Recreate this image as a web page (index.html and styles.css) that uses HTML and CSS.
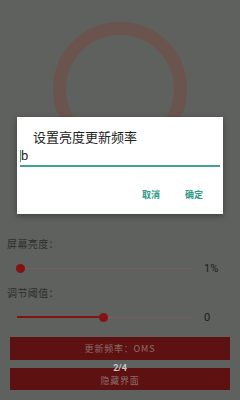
FILE: index.html
```html
<!DOCTYPE html>
<html lang="zh">
<head>
<meta charset="utf-8">
<link rel="stylesheet" href="styles.css">
</head>
<body>
<div class="page">
  <div class="hero"><div class="ring"></div></div>
  <div class="label label-first">屏幕亮度：</div>
  <div class="slider-row">
    <div class="track"><div class="fill" style="width:0px"></div><div class="thumb thumb-a"></div></div>
    <div class="value">1%</div>
  </div>
  <div class="label label-second">调节阈值：</div>
  <div class="slider-row slider-row-2">
    <div class="track"><div class="fill fill-2" style="width:87px"></div><div class="thumb thumb-b"></div></div>
    <div class="value">0</div>
  </div>
  <div class="btn btn-1">更新频率：OMS</div>
  <div class="btn btn-2">隐藏界面</div>
  <div class="counter">2/4</div>
</div>
<div class="dlg">
  <div class="dlg-title">设置亮度更新频率</div>
  <div class="dlg-input"><span class="caret"></span>b</div>
  <div class="dlg-actions">
    <span class="act">取消</span>
    <span class="act">确定</span>
  </div>
</div>
</body>
</html>
```
FILE: styles.css
```css
html, body {
  margin: 0;
  padding: 0;
}
body {
  width: 240px;
  height: 400px;
  background: #5f615e;
  font-family: "Noto Sans CJK SC", "Noto Sans", Roboto, sans-serif;
  position: relative;
  overflow: hidden;
}
.page {
  display: flex;
  flex-direction: column;
  position: relative;
  height: 400px;
}
.hero {
  display: flex;
  justify-content: center;
  padding-top: 22px;
}
.ring {
  width: 108px;
  height: 108px;
  border: 13px solid #6c544e;
  border-radius: 50%;
}
.label {
  font-size: 10px;
  line-height: 12px;
  height: 12px;
  color: #2c2e2c;
  padding-left: 7px;
  letter-spacing: 0.4px;
}
.label-first { margin-top: 82px; }
.label-second { margin-top: 11px; }
.slider-row {
  display: flex;
  align-items: center;
  height: 16px;
  margin-top: 10px;
}
.slider-row-2 { margin-top: 10px; }
.track {
  position: relative;
  margin-left: 17px;
  width: 175px;
  height: 1px;
  background: #7b5c5b;
}
.fill {
  position: absolute;
  left: 0;
  top: -1px;
  height: 2px;
  background: #7d1515;
}
.thumb {
  position: absolute;
  top: -4px;
  width: 9px;
  height: 9px;
  border-radius: 50%;
  background: #851212;
}
.thumb-a { left: -1px; }
.thumb-b { left: 82px; }
.value {
  margin-left: 12px;
  font-family: Roboto, "Noto Sans", sans-serif;
  font-size: 11px;
  color: #1c1e1c;
}
.btn {
  margin: 0 10px;
  background: #5e1111;
  color: #8c6e6c;
  font-size: 9px;
  letter-spacing: 0.8px;
  display: flex;
  align-items: center;
  justify-content: center;
}
.btn-1 { margin-top: 12px; height: 23px; }
.btn-2 { margin-top: 8px; height: 22px; padding-top: 2px; box-sizing: border-box; }
.counter {
  position: absolute;
  left: 0;
  right: 0;
  top: 362px;
  text-align: center;
  font-family: Roboto, "Noto Sans", sans-serif;
  font-size: 9px;
  font-weight: bold;
  line-height: 12px;
  color: #c9c9c9;
}
.dlg {
  position: absolute;
  left: 17px;
  top: 117px;
  width: 206px;
  height: 97px;
  background: #ffffff;
  box-shadow: 0 2px 6px rgba(0,0,0,0.35);
  display: flex;
  flex-direction: column;
}
.dlg-title {
  padding: 12px 16px 0;
  font-size: 13px;
  line-height: 16px;
  color: #222222;
}
.dlg-input {
  margin: 2px 3px 0 3px;
  height: 18px;
  border-bottom: 2px solid #45a08f;
  font-family: Roboto, "Noto Sans", sans-serif;
  font-size: 13px;
  line-height: 18px;
  color: #222222;
  display: flex;
  align-items: center;
}
.caret {
  width: 1px;
  height: 12px;
  background: #45a08f;
  margin-right: 0;
}
.dlg-actions {
  display: flex;
  justify-content: flex-end;
  gap: 25px;
  padding: 0 20px 0 0;
  margin-top: 22px;
}
.act {
  font-size: 9px;
  line-height: 12px;
  color: #2e9a87;
  font-weight: bold;
}
```
